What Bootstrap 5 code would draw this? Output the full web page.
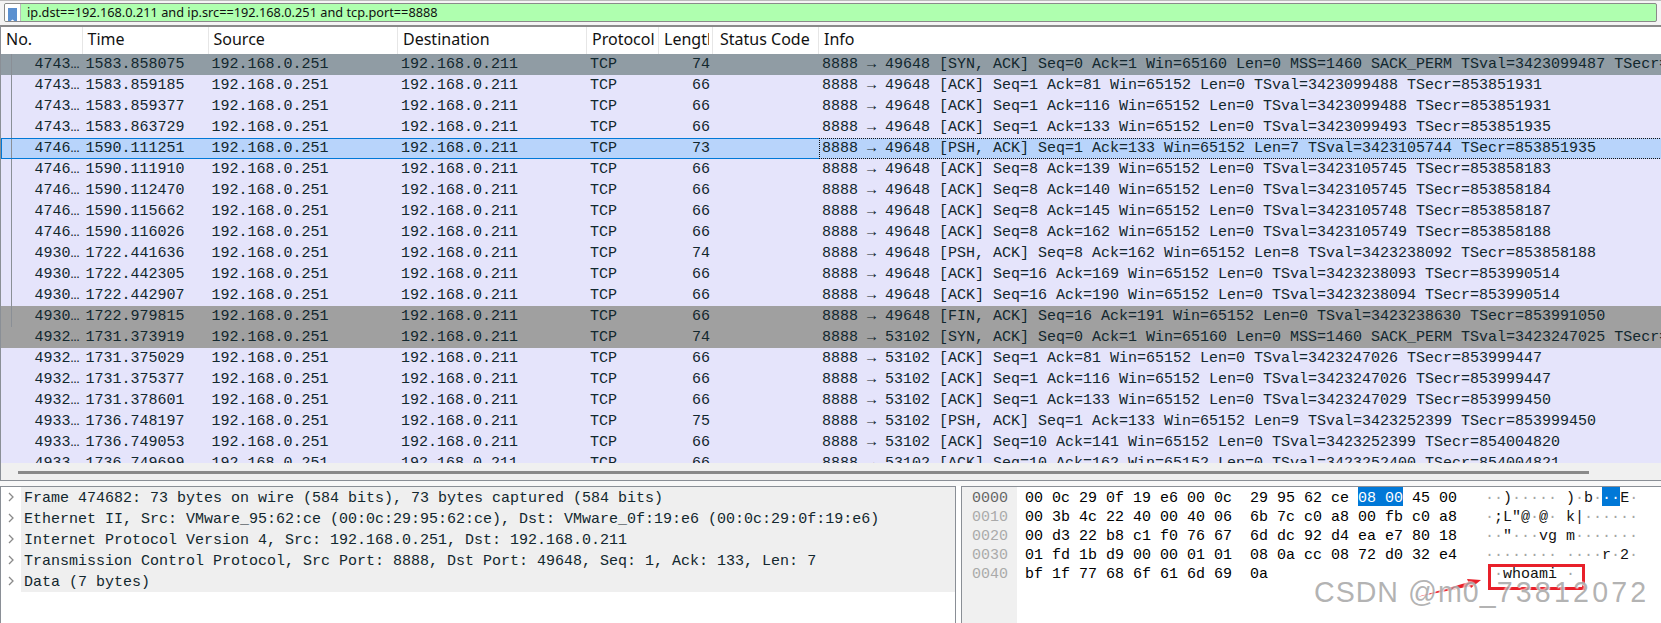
<!DOCTYPE html>
<html lang="en">
<head>
<meta charset="utf-8">
<title>Wireshark capture</title>
<link href="https://cdn.jsdelivr.net/npm/bootstrap@5.3.0/dist/css/bootstrap.min.css" rel="stylesheet">
<style>
html,body{height:623px;overflow:hidden;background:#fff}
body{font-family:"Liberation Mono",monospace;font-size:15px;color:#12272e;width:1661px}
.shell{height:623px;position:relative}
.filterwrap{height:25px;padding-top:2px;background:#f4f4f4;border-top:1px solid #bbb}
.filterbox{height:19px;border:1px solid #8a8a8a;border-radius:2px;background:#afffaf;overflow:hidden}
.bookbtn{width:16px;background:#fff;border-right:1px solid #bbb;padding:1px 0 0 3px;flex:none}
.filtertext{font-family:"Noto Sans",sans-serif;font-size:12.75px;line-height:17px;padding-left:6px;color:#111;white-space:nowrap}
.listpane{height:438px;overflow:hidden;border-left:1px solid #8a8f96;border-top:2px solid #8a8a8a}
.pk{table-layout:fixed;width:1661px;border-collapse:separate;border-spacing:0;--bs-table-bg:#e5e4fb;--bs-table-color:#12272e}
.pk>thead>tr>th{height:27px;padding:0 0 0 5px;background:#fff;font-family:"Noto Sans",sans-serif;font-weight:400;font-size:16px;line-height:25px;vertical-align:top;color:#111;border-right:1px solid #e6e6e6;overflow:hidden;white-space:nowrap;box-shadow:none}
.pk>thead>tr>th:last-child{border-right:0}
.pk>thead>tr>th.cutc{padding-right:3px}
.pk>thead>tr>th.w7{padding-left:7px}
.cutin{overflow:hidden}
.pk>tbody>tr>td{height:21px;padding:0 0 0 3px;line-height:21px;white-space:nowrap;overflow:hidden;font-size:15px;box-shadow:none;border:0}
.pk>tbody>tr>td.numc{text-align:right;padding:0 3px 0 0}
.pk>tbody>tr>td.lenc{text-align:right;padding:0 3px 0 0}
.pk>tbody>tr.lnk>td:first-child{background-image:linear-gradient(#8a8f96,#8a8f96);background-size:1px 100%;background-position:10px 0;background-repeat:no-repeat}
.w1{width:81.5px}.w2{width:126px}.w3{width:189.5px}.w4{width:189px}.w5{width:72px}.w6{width:54px}.w7{width:106px}
.r-syn{--bs-table-bg:#909ca4}
.r-fin{--bs-table-bg:#a0a0a0}
.r-sel{--bs-table-bg:#b8d4fb}
.pk>tbody>tr.r-sel>td{box-shadow:inset 0 1px #0078d7,inset 0 -1px #0078d7}
.pk>tbody>tr.r-sel>td:first-child{box-shadow:inset 0 1px #0078d7,inset 0 -1px #0078d7,inset 1px 0 #0078d7}
.pk>tbody>tr.r-sel>td.foc{box-shadow:none;outline:1px dotted #111;outline-offset:-1px}
.hscroll{height:18px;background:#f0f0f0;border-left:1px solid #8a8f96;border-bottom:1px solid #8a8f96;padding:8px 72px 0 17px}
.hthumb{height:3px;background:#8a8a8a}
.split{height:5px;background:#f8f8f8}
.lower{height:137px}
.treepane{width:956px;border-top:1px solid #8a8f96;border-left:1px solid #8a8f96;border-right:1px solid #8a8f96;flex:none}
.treerow{height:21px;line-height:23px;white-space:nowrap}
.chev{width:20px;flex:none;padding:0 0 2px 7px;line-height:21px}
.treetext{flex:1;background:#efefef;padding-left:3px;color:#12272e}
.hexpane{flex:1;border-top:1px solid #8a8f96;border-left:1px solid #8a8f96;margin-left:5px;color:#000}
.gutter{width:55px;background:#f0f0f0;padding:0 0 0 10px;flex:none;color:#aaa}
.hexlines{padding:0 0 0 8px}
.hexline{height:19px;line-height:23px;white-space:pre}
.offs{height:19px;line-height:23px}
.offs.curr{color:#666}
.bytes{width:460px;display:inline-block}
.asc{display:inline-block;color:#111}
.dt{color:#a6a6a6}
.hl{background:#0078d7;color:#fff;display:inline-block;height:19px;line-height:23px;vertical-align:top}
.redbox{position:absolute;left:1488px;top:564px;width:97px;height:26px;border:3px solid #e8202a}
.redarrow{position:absolute;left:1414px;top:576px}
.wmark{position:absolute;left:1314px;top:574px;font-family:"Liberation Sans",sans-serif;font-size:28.6px;line-height:36px;color:rgba(150,150,150,.72);text-shadow:1px 1px 1px rgba(255,255,255,.9),-1px -1px 1px rgba(255,255,255,.6);white-space:nowrap}
.wlead{letter-spacing:1px}
.wnum{letter-spacing:3.2px}
</style>
</head>
<body>
<div class="shell d-flex flex-column">
  <div class="filterwrap px-1">
    <div class="filterbox d-flex">
      <div class="bookbtn">
        <svg width="9" height="15" viewBox="0 0 9 15" aria-hidden="true"><path d="M0 0H9V15L4.500 11.500 0 15Z" fill="#5b90d0"/></svg>
      </div>
      <div class="filtertext">ip.dst==192.168.0.211 and ip.src==192.168.0.251 and tcp.port==8888</div>
    </div>
  </div>
  <div class="listpane">
    <table class="table table-borderless mb-0 pk">
      <thead><tr><th class="w1">No.</th><th class="w2">Time</th><th class="w3">Source</th><th class="w4">Destination</th><th class="w5">Protocol</th><th class="w6 cutc"><div class="cutin">Length</div></th><th class="w7">Status Code</th><th>Info</th></tr></thead>
      <tbody>
        <tr class="lnk r-syn"><td class="numc">4743…</td><td>1583.858075</td><td>192.168.0.251</td><td>192.168.0.211</td><td>TCP</td><td class="lenc">74</td><td></td><td>8888 → 49648 [SYN, ACK] Seq=0 Ack=1 Win=65160 Len=0 MSS=1460 SACK_PERM TSval=3423099487 TSecr=853851930</td></tr>
        <tr class="lnk"><td class="numc">4743…</td><td>1583.859185</td><td>192.168.0.251</td><td>192.168.0.211</td><td>TCP</td><td class="lenc">66</td><td></td><td>8888 → 49648 [ACK] Seq=1 Ack=81 Win=65152 Len=0 TSval=3423099488 TSecr=853851931</td></tr>
        <tr class="lnk"><td class="numc">4743…</td><td>1583.859377</td><td>192.168.0.251</td><td>192.168.0.211</td><td>TCP</td><td class="lenc">66</td><td></td><td>8888 → 49648 [ACK] Seq=1 Ack=116 Win=65152 Len=0 TSval=3423099488 TSecr=853851931</td></tr>
        <tr class="lnk"><td class="numc">4743…</td><td>1583.863729</td><td>192.168.0.251</td><td>192.168.0.211</td><td>TCP</td><td class="lenc">66</td><td></td><td>8888 → 49648 [ACK] Seq=1 Ack=133 Win=65152 Len=0 TSval=3423099493 TSecr=853851935</td></tr>
        <tr class="lnk r-sel"><td class="numc">4746…</td><td>1590.111251</td><td>192.168.0.251</td><td>192.168.0.211</td><td>TCP</td><td class="lenc">73</td><td></td><td class="foc">8888 → 49648 [PSH, ACK] Seq=1 Ack=133 Win=65152 Len=7 TSval=3423105744 TSecr=853851935</td></tr>
        <tr class="lnk"><td class="numc">4746…</td><td>1590.111910</td><td>192.168.0.251</td><td>192.168.0.211</td><td>TCP</td><td class="lenc">66</td><td></td><td>8888 → 49648 [ACK] Seq=8 Ack=139 Win=65152 Len=0 TSval=3423105745 TSecr=853858183</td></tr>
        <tr class="lnk"><td class="numc">4746…</td><td>1590.112470</td><td>192.168.0.251</td><td>192.168.0.211</td><td>TCP</td><td class="lenc">66</td><td></td><td>8888 → 49648 [ACK] Seq=8 Ack=140 Win=65152 Len=0 TSval=3423105745 TSecr=853858184</td></tr>
        <tr class="lnk"><td class="numc">4746…</td><td>1590.115662</td><td>192.168.0.251</td><td>192.168.0.211</td><td>TCP</td><td class="lenc">66</td><td></td><td>8888 → 49648 [ACK] Seq=8 Ack=145 Win=65152 Len=0 TSval=3423105748 TSecr=853858187</td></tr>
        <tr class="lnk"><td class="numc">4746…</td><td>1590.116026</td><td>192.168.0.251</td><td>192.168.0.211</td><td>TCP</td><td class="lenc">66</td><td></td><td>8888 → 49648 [ACK] Seq=8 Ack=162 Win=65152 Len=0 TSval=3423105749 TSecr=853858188</td></tr>
        <tr class="lnk"><td class="numc">4930…</td><td>1722.441636</td><td>192.168.0.251</td><td>192.168.0.211</td><td>TCP</td><td class="lenc">74</td><td></td><td>8888 → 49648 [PSH, ACK] Seq=8 Ack=162 Win=65152 Len=8 TSval=3423238092 TSecr=853858188</td></tr>
        <tr class="lnk"><td class="numc">4930…</td><td>1722.442305</td><td>192.168.0.251</td><td>192.168.0.211</td><td>TCP</td><td class="lenc">66</td><td></td><td>8888 → 49648 [ACK] Seq=16 Ack=169 Win=65152 Len=0 TSval=3423238093 TSecr=853990514</td></tr>
        <tr class="lnk"><td class="numc">4930…</td><td>1722.442907</td><td>192.168.0.251</td><td>192.168.0.211</td><td>TCP</td><td class="lenc">66</td><td></td><td>8888 → 49648 [ACK] Seq=16 Ack=190 Win=65152 Len=0 TSval=3423238094 TSecr=853990514</td></tr>
        <tr class="lnk r-fin"><td class="numc">4930…</td><td>1722.979815</td><td>192.168.0.251</td><td>192.168.0.211</td><td>TCP</td><td class="lenc">66</td><td></td><td>8888 → 49648 [FIN, ACK] Seq=16 Ack=191 Win=65152 Len=0 TSval=3423238630 TSecr=853991050</td></tr>
        <tr class="r-fin"><td class="numc">4932…</td><td>1731.373919</td><td>192.168.0.251</td><td>192.168.0.211</td><td>TCP</td><td class="lenc">74</td><td></td><td>8888 → 53102 [SYN, ACK] Seq=0 Ack=1 Win=65160 Len=0 MSS=1460 SACK_PERM TSval=3423247025 TSecr=853999446</td></tr>
        <tr><td class="numc">4932…</td><td>1731.375029</td><td>192.168.0.251</td><td>192.168.0.211</td><td>TCP</td><td class="lenc">66</td><td></td><td>8888 → 53102 [ACK] Seq=1 Ack=81 Win=65152 Len=0 TSval=3423247026 TSecr=853999447</td></tr>
        <tr><td class="numc">4932…</td><td>1731.375377</td><td>192.168.0.251</td><td>192.168.0.211</td><td>TCP</td><td class="lenc">66</td><td></td><td>8888 → 53102 [ACK] Seq=1 Ack=116 Win=65152 Len=0 TSval=3423247026 TSecr=853999447</td></tr>
        <tr><td class="numc">4932…</td><td>1731.378601</td><td>192.168.0.251</td><td>192.168.0.211</td><td>TCP</td><td class="lenc">66</td><td></td><td>8888 → 53102 [ACK] Seq=1 Ack=133 Win=65152 Len=0 TSval=3423247029 TSecr=853999450</td></tr>
        <tr><td class="numc">4933…</td><td>1736.748197</td><td>192.168.0.251</td><td>192.168.0.211</td><td>TCP</td><td class="lenc">75</td><td></td><td>8888 → 53102 [PSH, ACK] Seq=1 Ack=133 Win=65152 Len=9 TSval=3423252399 TSecr=853999450</td></tr>
        <tr><td class="numc">4933…</td><td>1736.749053</td><td>192.168.0.251</td><td>192.168.0.211</td><td>TCP</td><td class="lenc">66</td><td></td><td>8888 → 53102 [ACK] Seq=10 Ack=141 Win=65152 Len=0 TSval=3423252399 TSecr=854004820</td></tr>
        <tr><td class="numc">4933…</td><td>1736.749699</td><td>192.168.0.251</td><td>192.168.0.211</td><td>TCP</td><td class="lenc">66</td><td></td><td>8888 → 53102 [ACK] Seq=10 Ack=162 Win=65152 Len=0 TSval=3423252400 TSecr=854004821</td></tr>
      </tbody>
    </table>
  </div>
  <div class="hscroll"><div class="hthumb"></div></div>
  <div class="split"></div>
  <div class="lower d-flex">
    <div class="treepane">
      <div class="treerow d-flex"><div class="chev"><svg width="6" height="10" viewBox="0 0 6 10" aria-hidden="true"><path d="M1 1L5 5 1 9" fill="none" stroke="#8a8a8a" stroke-width="1.300"/></svg></div><div class="treetext">Frame 474682: 73 bytes on wire (584 bits), 73 bytes captured (584 bits)</div></div>
      <div class="treerow d-flex"><div class="chev"><svg width="6" height="10" viewBox="0 0 6 10" aria-hidden="true"><path d="M1 1L5 5 1 9" fill="none" stroke="#8a8a8a" stroke-width="1.300"/></svg></div><div class="treetext">Ethernet II, Src: VMware_95:62:ce (00:0c:29:95:62:ce), Dst: VMware_0f:19:e6 (00:0c:29:0f:19:e6)</div></div>
      <div class="treerow d-flex"><div class="chev"><svg width="6" height="10" viewBox="0 0 6 10" aria-hidden="true"><path d="M1 1L5 5 1 9" fill="none" stroke="#8a8a8a" stroke-width="1.300"/></svg></div><div class="treetext">Internet Protocol Version 4, Src: 192.168.0.251, Dst: 192.168.0.211</div></div>
      <div class="treerow d-flex"><div class="chev"><svg width="6" height="10" viewBox="0 0 6 10" aria-hidden="true"><path d="M1 1L5 5 1 9" fill="none" stroke="#8a8a8a" stroke-width="1.300"/></svg></div><div class="treetext">Transmission Control Protocol, Src Port: 8888, Dst Port: 49648, Seq: 1, Ack: 133, Len: 7</div></div>
      <div class="treerow d-flex"><div class="chev"><svg width="6" height="10" viewBox="0 0 6 10" aria-hidden="true"><path d="M1 1L5 5 1 9" fill="none" stroke="#8a8a8a" stroke-width="1.300"/></svg></div><div class="treetext">Data (7 bytes)</div></div>
    </div>
    <div class="hexpane d-flex">
      <div class="gutter">
        <div class="offs curr">0000</div><div class="offs">0010</div><div class="offs">0020</div><div class="offs">0030</div><div class="offs">0040</div>
      </div>
      <div class="hexlines">
        <div class="hexline"><span class="bytes">00 0c 29 0f 19 e6 00 0c  29 95 62 ce <span class="hl">08 00</span> 45 00</span><span class="asc"><span class="dt">··</span>)<span class="dt">·····</span> )<span class="dt">·</span>b<span class="dt">·</span><span class="hl">··</span>E<span class="dt">·</span></span></div>
        <div class="hexline"><span class="bytes">00 3b 4c 22 40 00 40 06  6b 7c c0 a8 00 fb c0 a8</span><span class="asc"><span class="dt">·</span>;L"@<span class="dt">·</span>@<span class="dt">·</span> k|<span class="dt">······</span></span></div>
        <div class="hexline"><span class="bytes">00 d3 22 b8 c1 f0 76 67  6d dc 92 d4 ea e7 80 18</span><span class="asc"><span class="dt">··</span>"<span class="dt">···</span>vg m<span class="dt">·······</span></span></div>
        <div class="hexline"><span class="bytes">01 fd 1b d9 00 00 01 01  08 0a cc 08 72 d0 32 e4</span><span class="asc"><span class="dt">········ ····</span>r<span class="dt">·</span>2<span class="dt">·</span></span></div>
        <div class="hexline"><span class="bytes">bf 1f 77 68 6f 61 6d 69  0a</span><span class="asc"><span class="dt">··</span>whoami <span class="dt">·</span></span></div>
      </div>
    </div>
  </div>
  <svg class="redarrow" width="70" height="24" viewBox="0 0 70 24" aria-hidden="true"><path d="M3 21L55 6 57 10Z" fill="#e8202a"/><path d="M67 4L53 3 57 12Z" fill="#e8202a"/></svg>
  <div class="redbox"></div>
  <div class="wmark"><span class="wlead">CSDN @m0_</span><span class="wnum">73812072</span></div>
</div>
<script src="https://cdn.jsdelivr.net/npm/bootstrap@5.3.0/dist/js/bootstrap.bundle.min.js"></script>
</body>
</html>
